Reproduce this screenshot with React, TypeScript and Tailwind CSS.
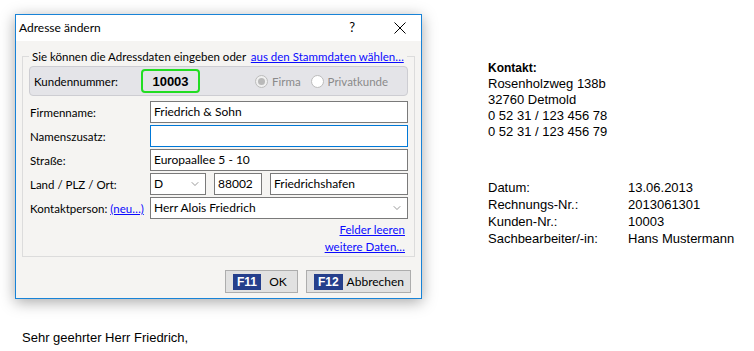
import { ChevronDown } from "lucide-react"

const ui = { fontFamily: 'Lato, "Noto Sans", sans-serif' }
const doc = { fontFamily: '"Liberation Sans", Arial, sans-serif' }

function Field({ value = "", focused = false, className = "" }: { value?: string; focused?: boolean; className?: string }) {
  return (
    <div
      className={`h-[22px] bg-white border flex items-center px-[3px] text-[12px] text-black whitespace-nowrap ${
        focused ? "border-[#0078d7]" : "border-[#7a7a7a]"
      } ${className}`}
    >
      {value}
    </div>
  )
}

function Select({ value, className = "" }: { value: string; className?: string }) {
  return (
    <div className={`h-[22px] bg-white border border-[#7a7a7a] flex items-center justify-between pl-[3px] pr-[4px] text-[12px] whitespace-nowrap ${className}`}>
      <span>{value}</span>
      <ChevronDown className="w-[12px] h-[12px] text-[#555]" strokeWidth={1.2} />
    </div>
  )
}

function Radio({ label, checked = false }: { label: string; checked?: boolean }) {
  return (
    <div className="flex items-center gap-[4px] text-[#8a8a8a] whitespace-nowrap">
      <span
        className={`w-[13px] h-[13px] rounded-full border border-[#bcbcbc] flex items-center justify-center ${
          checked ? "bg-[#f0f0f0]" : "bg-white"
        }`}
      >
        {checked && <span className="w-[7px] h-[7px] rounded-full bg-[#b9b9b9]" />}
      </span>
      <span>{label}</span>
    </div>
  )
}

function Row({ label, children }: { label: React.ReactNode; children: React.ReactNode }) {
  return (
    <div className="flex items-center h-[24px]">
      <div className="w-[121px] pl-[1px] whitespace-nowrap">{label}</div>
      <div className="flex-1 flex gap-[8px]">{children}</div>
    </div>
  )
}

function KeyButton({ fkey, label, className = "" }: { fkey: string; label: string; className?: string }) {
  return (
    <div className={`h-[23px] bg-[#e1e1e1] border border-[#adadad] flex items-center pl-[7px] pr-[2px] whitespace-nowrap ${className}`}>
      <span className="bg-[#253f8c] text-white font-bold text-[12px] leading-none px-[4px] py-[2px]" style={doc}>
        {fkey}
      </span>
      <span className="flex-1 text-center text-[12px]">{label}</span>
    </div>
  )
}

function Dialog() {
  return (
    <div
      className="w-[407px] h-[285px] bg-[#f5f4f2] border border-[#1883d7] shadow-[0_3px_14px_rgba(0,0,0,0.35)] flex flex-col text-[11.5px] text-black"
      style={ui}
    >
      {/* title bar */}
      <div className="h-[26px] bg-white flex items-center pl-[3px] pr-[15px] text-[12px]">
        <span className="flex-1">Adresse ändern</span>
        <span className="mr-[39px] text-[13px]">?</span>
        <svg width="12" height="12" viewBox="0 0 12 12" className="text-black">
          <path d="M0.5 0.5 L11.5 11.5 M11.5 0.5 L0.5 11.5" stroke="currentColor" strokeWidth="1" />
        </svg>
      </div>

      {/* body */}
      <div className="flex-1 flex flex-col px-[6px]">
        <fieldset className="mt-[7px] min-w-0 border border-[#dcdcdc] px-[6px] pb-[4px] h-[209px]">
          <legend className="px-[3px] whitespace-nowrap text-[11.5px]">
            Sie können die Adressdaten eingeben oder{" "}
            <span className="text-[#0a0aff] underline ml-[2px]">aus den Stammdaten wählen…</span>
          </legend>

          <div className="mt-[1px] h-[30px] bg-[#e4e4e8] border border-[#cdcdd2] rounded-[4px] flex items-center pl-[4px]">
            <span className="w-[107px]">Kundennummer:</span>
            <span
              className="w-[59px] h-[24px] border-2 border-[#22dd22] rounded-[4px] flex items-center justify-center font-bold text-[13px]"
              style={doc}
            >
              10003
            </span>
            <div className="ml-[55px] flex items-center gap-[10px]">
              <Radio label="Firma" checked />
              <Radio label="Privatkunde" />
            </div>
          </div>

          <div className="mt-[4px] flex flex-col">
            <Row label="Firmenname:">
              <Field value="Friedrich & Sohn" className="flex-1" />
            </Row>
            <Row label="Namenszusatz:">
              <Field focused className="flex-1" />
            </Row>
            <Row label="Straße:">
              <Field value="Europaallee 5 - 10" className="flex-1" />
            </Row>
            <Row label="Land / PLZ / Ort:">
              <Select value="D" className="w-[56px]" />
              <Field value="88002" className="w-[48px]" />
              <Field value="Friedrichshafen" className="flex-1" />
            </Row>
            <Row
              label={
                <span>
                  Kontaktperson: <span className="text-[#0a0aff] underline">(neu…)</span>
                </span>
              }
            >
              <Select value="Herr Alois Friedrich" className="flex-1" />
            </Row>
          </div>

          <div className="flex flex-col items-end pr-[3px] mt-[1px] leading-[17px]">
            <span className="text-[#0a0aff] underline">Felder leeren</span>
            <span className="text-[#0a0aff] underline">weitere Daten…</span>
          </div>
        </fieldset>

        <div className="mt-[13px] flex justify-end gap-[8px] pr-[4px]">
          <KeyButton fkey="F11" label="OK" className="w-[73px]" />
          <KeyButton fkey="F12" label="Abbrechen" className="w-[105px]" />
        </div>
      </div>
    </div>
  )
}

export default function App() {
  return (
    <div className="w-[754px] h-[351px] bg-white overflow-hidden flex flex-col">
      <div className="flex pt-[14px] pl-[15px]">
        <Dialog />

        <div className="ml-[66px] pt-[46px] text-[13px] text-black leading-[16px]" style={doc}>
          <div className="font-bold text-[12px]">Kontakt:</div>
          <div>Rosenholzweg 138b</div>
          <div>32760 Detmold</div>
          <div>0 52 31 / 123 456 78</div>
          <div>0 52 31 / 123 456 79</div>

          <div className="mt-[39px] grid grid-cols-[140px_1fr] leading-[17px]">
            <span>Datum:</span>
            <span>13.06.2013</span>
            <span>Rechnungs-Nr.:</span>
            <span>2013061301</span>
            <span>Kunden-Nr.:</span>
            <span>10003</span>
            <span>Sachbearbeiter/-in:</span>
            <span className="whitespace-nowrap">Hans Mustermann</span>
          </div>
        </div>
      </div>

      <div className="pl-[22px] mt-[29px] text-[13px] text-black" style={doc}>
        Sehr geehrter Herr Friedrich,
      </div>
    </div>
  )
}
